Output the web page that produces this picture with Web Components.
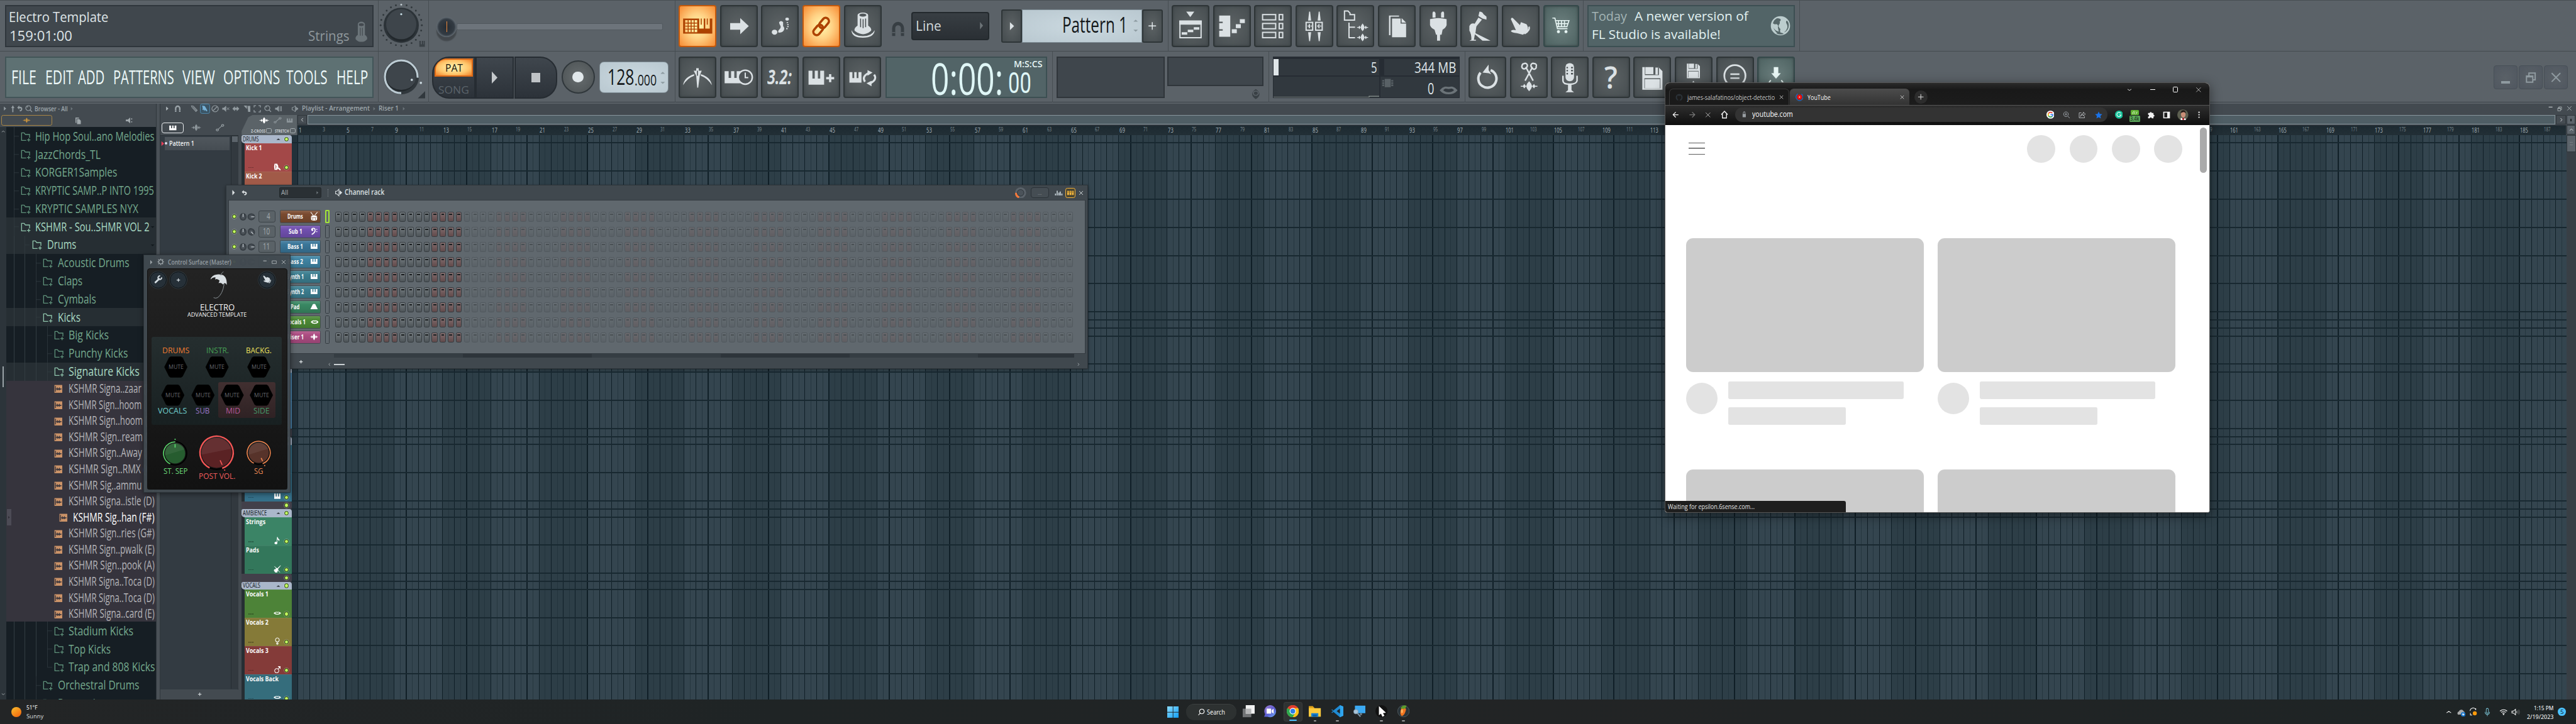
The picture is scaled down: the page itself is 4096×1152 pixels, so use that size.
<!DOCTYPE html>
<html lang="en"><head><meta charset="utf-8"><title>Desktop</title>
<style>html,body{margin:0;background:#1f2425;overflow:hidden;width:4096px;height:1152px}</style></head>
<body><desk-top></desk-top>
<script>
const BASE=`*{box-sizing:border-box}:host{display:block;font-family:"Open Sans","Noto Sans",sans-serif}
.row{display:flex;align-items:flex-start;flex:none}.b{flex:none;display:flex;align-items:center;justify-content:center}
svg{display:block;flex:none}.col{display:flex;flex-direction:column}`;
function def(name,css,render){customElements.define(name,class extends HTMLElement{
 connectedCallback(){if(this.shadowRoot)return;const r=this.attachShadow({mode:'open'});const t=document.createElement('template');
 t.innerHTML=`<style>${BASE}${css}</style>`+render(this);r.appendChild(t.content.cloneNode(true));}});}
/* flex row whose children are spaced by margins: [x,y,w,h,html,class,style] */
const B=(x0,y0,items,st='',cls='')=>{let p=x0;return `<div class="row ${cls}" style="${st}">`+items.map(([x,y,w,h,html='',c='',s=''])=>{
 const m=x-p;p=x+w;return `<div class="b ${c}" style="margin:${(y-y0).toFixed(1)}px 0 0 ${m.toFixed(1)}px;width:${w}px;height:${h}px;${s}">${html}</div>`}).join('')+'</div>'};
const T=(t,w,s,c,wt=400,f='Open Sans')=>`<t-x w="${w}" s="${s}" wt="${wt}" f="${f}" style="color:${c}">${t}</t-x>`;
const tx=(x,cy,w,s,t,c,wt,f)=>[x,cy-s*.7,w,s*1.4,T(t,w,s,c,wt,f)];
const I=(n,w,c='#dde3e6',h=w)=>`<ui-icon n="${n}" w="${w}" h="${h}" style="color:${c}"></ui-icon>`;
const ic=(cx,cy,w,n,c,h=w)=>[cx-w/2,cy-h/2,w,h,I(n,w,c,h)];

const mc=document.createElement('canvas').getContext('2d');
def('t-x',`:host{display:block;white-space:nowrap;flex:none}span{display:inline-block;transform-origin:0 50%}`,e=>{
 const w=+e.getAttribute('w'),s=+e.getAttribute('s'),wt=e.getAttribute('wt'),f=e.getAttribute('f');
 mc.font=`${wt} 100px "${f}"`;const n=mc.measureText(e.textContent).width*s/100;
 return `<style>:host{width:${w}px;height:${s*1.4}px;font:${wt} ${s}px/${s*1.4}px "${f}",sans-serif}span{transform:scaleX(${(w/n).toFixed(4)})}</style><span><slot></slot></span>`});

const P='<path d="M2 4h5v9h3V4h4v9h3V4h5v16H2z"/>';
const S=(d,w=2,x='')=>`<path d="${d}" fill="none" stroke="currentColor" stroke-width="${w}" ${x}/>`;
const ICON={
 tri:'<path d="M8 4l9 8-9 8z"/>',tup:'<path d="M3 19l9-14 9 14z"/>',tdn:'<path d="M3 5l9 14 9-14z"/>',tcap:'<path d="M2 18l10-11 10 11z"/>',
 chr:S('M8 3l8 9-8 9',3),chl:S('M16 3l-8 9 8 9',3),chu:S('M3 16l9-9 9 9',3),chd:S('M3 8l9 9 9-9',3),
 up:'<path d="M12 1l7 9h-4.500v13h-5V10H5z"/>',undo:'<path d="M9 1v5c9 0 13 3 12 9-.600 4-4 7-9 7l-2-4c4 0 6-1 6-4 0-2-2-3-7-3v5L1 9z"/>',
 mag:S('M16 16l6 6M10 2a8 8 0 1 0 .1 0M6 8a5 5 0 0 1 4-3',2.4),magnet:S('M5 22V11a7 7 0 0 1 14 0v11',5,'')+'<path d="M2.500 17h5M16.500 17h5" stroke="#5b6268" stroke-width="1.300"/>',
 piano:P,wave:'<path d="M1 11h3l1.500-4L8 12l1.500-6 2.500-5 2.500 5L16 12l2.500-5L20 11h3v2h-3l-1.500 4L16 12l-1.500 6-2.500 5-2.500-5L8 12l-2.500 5L4 13H1z"/>',
 auto:S('M7 17l10-10M4.500 16.500a3 3 0 1 0 .1 0M19.500 2a3 3 0 1 0 .1 0',2),
 docs:'<path d="M4 2h11v3H7v14H4z"/><path d="M9 7h7l5 5v11H9z"/>',spk:'<path d="M2 9h6l7-7v20l-7-7H2zM18 5h3v4h-3zM18 15h3v4h-3z"/>',
 folder:S('M21 14V6H11L8 2H2v18h11M19 15v8M15 19h8',2),pencil:S('M3 3l6 1 12 13-4 4L5 8zM8 7l10 11',2.200),brush:'<path d="M3 2l9 2 4 6 5 10-3 2-5-5-3 4-1-5-5 1 1-6z"/>',
 no:S('M12 2a10 10 0 1 0 .1 0M5 19L19 5',2.5),mute:'<path d="M1 9h5l7-7v20l-7-7H1z"/>'+S('M15 8l8 8M23 8l-8 8',2),lr:'<path d="M1 12l8-8v5h6V4l8 8-8 8v-5H9v5z"/>',
 slice:'<path d="M1 2h10v11zM13 3h9v19h-7z"/>',sel:S('M2 8V2h6M16 2h6v6M22 16v6h-6M8 22H2v-6',2.500),play:'<path d="M1 9h5l7-7v20l-7-7H1zM16 4h2v16h-2zM20 4h2v16h-2z"/>',
 spk2:S('M3 8h4l6-6v20l-6-6H3z',2)+'<path d="M15 5l8 7-8 7z"/>',plus:S('M12 3v18M3 12h18',4),plus2:S('M12 2v20M2 12h20',2.4),
 gear:S('M12 5a7 7 0 1 0 .1 0M12 1v4M12 19v4M1 12h4M19 12h4M4 4l3 3M17 17l3 3M20 4l-3 3M4 20l3-3',3),
 min:S('M2 8h20',4),max:S('M2 6h20v13H2z',2.5),x:S('M3 3l18 18M21 3L3 21',2.6),xs:S('M3 3l18 18M21 3L3 21',1.7),rest:S('M3 9h13v13H3zM8 8V3h13v14h-4',2.6)+'<path d="M3 8h13v4H3z"/>',
 drum:S('M2 1l8 9M22 1l-8 8',1.800)+'<path d="M3 13a9 3.500 0 0 1 18 0v7a9 3.500 0 0 1-18 0z"/><path d="M4.500 13.500a7.500 2 0 0 0 15 0M8 17v5M16 17v5" stroke="#6e4028" fill="none" stroke-width="1.300"/>',
 bass:S('M5 8a5 5 0 0 1 10-1c1 6-3 11-10 15',3)+'<circle cx="7" cy="8" r="3"/><circle cx="20" cy="6" r="1.700"/><circle cx="20" cy="13" r="1.700"/>',
 hill:'<path d="M1 20L8 5q4-4 8 0l7 15z"/>',lips:S('M2.500 12C6 5 9 6.500 12 7.500 15 6.500 18 5 21.500 12 17 20 7 20 2.500 12z',4),
 kick:'<path d="M3 3h9v18H3q-3-9 0-18z"/><path d="M7 6v12M7 12h4" stroke="#a34848" stroke-width="1.500"/><path d="M13 5q4 7 0 14h-2V5z"/><path d="M15 13l5 4 3 4-2 2-7-5z"/>',
 note:'<path d="M11 1h2q1 5 6 8l-2 5q0-4-5-6v11a4.500 3.500 0 1 1-2-3z"/>',violin:'<path d="M22 1l1 1-9 10 2 4-3 1-1 5-6 1-5-6 1-4 5-1 1-4 4 2z"/>'+S('M3 4l17 18',1.800),
 fem:S('M12 2a6 6 0 1 0 .1 0M12 14v9M8 19h8',2),male:S('M10 9a6.500 6.500 0 1 0 .1 0M14.500 10.500L21 3M14 3h7v7',2),
 wrench:S('M4 20l10-10',5,'stroke-linecap="round"')+S('M21 6a5 5 0 1 1-4-4',3.500),
 hand:'<path d="M1 3q0-2 2-2l7 6 1-2 7 2q4 4 2 9l-5 5-8-2q-5-1-5-3t5-1z"/>'+S('M22 13q0 5-5 9',2),
 eye:'<path d="M12 1q13 11 0 22-13-11 0-22z"/><circle cx="12" cy="10" r="4.500" fill="none" stroke="#5b6268" stroke-width="2"/>',
 chip:'<path d="M6 1h12v22H6zM1 4h4v4H1zM1 10h4v4H1zM1 16h4v4H1zM19 4h4v4h-4zM19 10h4v4h-4zM19 16h4v4h-4z"/>',
 globe:'<circle cx="12" cy="12" r="11.500"/><path d="M8 3q-4 2-5 6 2 2 4 1 3 1 2 4l1 5q-5-1-7-6 3 8 8 9 2 0 1-2-1-2 0-4-3-3-2-5 2-2 1-4 2-1 1-3-2-1-4-1z" fill="#566769"/><path d="M20 6q-2 0-1 3 2 3 1 6-1 3-4 5 6-2 6-9 0-3-2-5zM7 21q5-2 9 .500-4 2-9-.500z" fill="#566769"/>',
 cyl:'<path d="M7 4a5 3 0 0 1 10 0v12q4 2 3 5-3 3-8 3t-8-3q-1-3 3-5z"/><path d="M8.500 4.500a3.500 1.600 0 0 0 7 0 3.500 1.600 0 0 0-7 0z" fill="#43494f"/><path d="M10.500 8v9M13.500 8v9" stroke="#43494f" stroke-width="1"/>',
 graph:'<path d="M1 15h3v8H1zM6 4h3v19H6zM11 11h3v12h-3zM15 7h3v16h-3zM20 15h3v8h-3z" fill="#c6d2d8"/>',
 bars3:'<path d="M2 2h5.500v20H2zM9.500 2H15v20H9.500zM17 2h5.500v20H17z"/><path d="M3 8h3M10.500 8h3M18 8h3" stroke="#5a4210" stroke-width="2"/>',
 samp:'<path d="M1 1h22v22H1z"/><path d="M4 4v16M5 12h16M9 8v8M12 10v5M15 8v8M18 11v3" stroke="#33313a" stroke-width="2.200"/>',
 /* browser window */
 back:S('M21 12H4M12 3l-9 9 9 9',2.800),fwd:S('M3 12h17M12 3l9 9-9 9',2.800),home:S('M2 12L12 2l10 10M5.500 10v12h13V10',2.800),
 lock:'<path d="M5 10h14v12H5z"/>'+S('M8 11V6a4 4 0 0 1 8 0v5',2.400),
 goog:'<circle cx="12" cy="12" r="12" fill="#fff"/><g fill="none" stroke-width="3.300"><path d="M17.500 7.500A7 7 0 0 0 6 8.500" stroke="#ea4335"/><path d="M6 8.500a7 7 0 0 0 0 7" stroke="#fbbc05"/><path d="M6 15.500a7 7 0 0 0 11 1.500" stroke="#34a853"/><path d="M17 17a7 7 0 0 0 2-5h-7" stroke="#4285f4"/></g>',
 zin:S('M16 16l6 6M10 2a7.500 7.500 0 1 0 .1 0M10 6v7M6.500 9.500h7',2),share:S('M9 5H2v16h17v-5M15 3l7 6-7 6v-4q-7 0-9 6 1-9 9-10z',1.800),
 star:'<path d="M12 1l3.400 7.500 8 .9-6 5.500 1.700 8L12 18.800 4.900 22.900l1.700-8-6-5.500 8-.9z"/>',
 gram:'<circle cx="12" cy="12" r="12" fill="#15c39a"/><path d="M17 8a6.300 6.300 0 1 0 1 5h-5" fill="none" stroke="#fff" stroke-width="2"/>',
 puz:'<path d="M3 7h5a3 3 0 1 1 6 0h5v5a3 3 0 1 1 0 6v5h-5a3 3 0 0 0-6 0H3v-5a3 3 0 0 0 0-6z"/>',side:S('M3 3h18v18H3z',3.400)+'<path d="M14 3h8v18h-8z"/>',
 vdots:'<circle cx="12" cy="3.500" r="2.500"/><circle cx="12" cy="12" r="2.500"/><circle cx="12" cy="20.500" r="2.500"/>',
 git:'<circle cx="12" cy="12" r="11" fill="#2b3238"/><path d="M9 23v-4q-3 1-4-2M9 23v-5q-4-1-4-6 0-2 1-3 0-2 0-3 2 0 3 1h6q1-1 3-1v3q1 1 1 3 0 5-4 6v5" fill="#1b1b1b"/>',
 ytl:'<circle cx="12" cy="12" r="10.500" fill="none" stroke="#2563b8" stroke-width="2.600" stroke-dasharray="54 12" transform="rotate(-60 12 12)"/><circle cx="12" cy="12" r="7.500" fill="#f20d0d"/><circle cx="12" cy="12" r="1.800" fill="#fff"/>',
 ava:'<circle cx="12" cy="12" r="12" fill="#5c5f50"/><ellipse cx="13" cy="11" rx="5" ry="7" fill="#c98f78"/><path d="M7 9q1-8 7-7 5 1 4 7-2-4-5-3-4 0-6 3z" fill="#231a17"/><path d="M8 18l5 3 4-2 2 3q-6 4-12 0z" fill="#fff"/><path d="M11 19h4v4h-4z" fill="#b3202a"/>',
 /* taskbar */
 win:'<linearGradient id="a" x2="1" y2="1"><stop stop-color="#8adcff"/><stop offset="1" stop-color="#0f9cf5"/></linearGradient><path fill="url(#a)" d="M0 0h11.400v11.400H0zM12.600 0H24v11.400H12.600zM0 12.600h11.400V24H0zM12.600 12.600H24V24H12.600z"/>',
 find:S('M3 22l6-7M14 2.500a7.500 7.500 0 1 0 .1 0',2.200),
 tview:'<path d="M0 7h17v17H0z" fill="#707274"/><path d="M6 0h18v17H6z" fill="#f1f1f1"/><path d="M6 7h11v10H6z" fill="#b5b6b7"/>',
 chat:'<linearGradient id="b" x2="0.800" y2="1"><stop stop-color="#a37fd0"/><stop offset=".6" stop-color="#5a5bd0"/><stop offset="1" stop-color="#6aa0f0"/></linearGradient><path fill="url(#b)" d="M12 0a12 12 0 1 1-5 23H0l2-5A12 12 0 0 1 12 0z"/><path fill="#fff" d="M5 7h9v10H5zM15 10l4-3v10l-4-3z"/>',
 chrome:'<circle cx="12" cy="12" r="12" fill="#fbc116"/><path d="M12 12L1.600 6A12 12 0 0 1 22.400 6z" fill="#e33b2e"/><path d="M12 12L1.600 6A12 12 0 0 0 12 24l5-9z" fill="#2da94f"/><path d="M22.400 6H12v6l5 3-5 9A12 12 0 0 0 22.400 6z" fill="#fbc116"/><circle cx="12" cy="12" r="6.300" fill="#fff"/><circle cx="12" cy="12" r="4.900" fill="#2b7de9"/>',
 expl:'<path d="M0 2h8l3 3v5H0z" fill="#e0a21a"/><path d="M0 6h24v17H0z" fill="#fdca3d"/><path d="M5 16h14v7H5z" fill="#1a7fd0"/><path d="M8 19h8v4H8z" fill="#0b5fa8"/>',
 code:'<path d="M17 0l7 3v18l-7 3L4 13.500 1.500 15.500 0 14.500v-5l1.500-1L4 10.500z" fill="#1f8ad2"/><path d="M17 0l7 3v18l-7 3z" fill="#2fa5ee"/><path d="M17 7v10l-6.500-5z" fill="#202425"/><path d="M0 9.500l3.500 2.500L0 14.500z" fill="#202425"/>',
 rdp:'<path d="M3 1h21v15H3z" fill="#3ba9f2"/><path d="M13 16h4v4h-4z" fill="#6b7c88"/><circle cx="5" cy="13" r="4.500" fill="#a9c4d8" stroke="#7e96a8"/><path d="M8 16l6 7" stroke="#7e96a8" stroke-width="2.500"/>',
 cur:'<circle cx="12" cy="12" r="12" fill="#111"/><path d="M7 2v18l4-3 3 6 4-2-3-5 6-1z" fill="#fff"/>',
 fruit:'<circle cx="12" cy="12" r="11.500" fill="#2a3338" stroke="#56636a"/><path d="M8 6q9-2 9 3-2 10-8 13-6-4-1-16z" fill="#ef7420"/><path d="M6 6q4-7 12-5-1 8-9 6z" fill="#5b9c2c"/><ellipse cx="9" cy="12" rx="2" ry="4" fill="#ffb35c"/>',
 cloud:'<path d="M3 18a5 5 0 0 1 2-9 7 7 0 0 1 13-1q5 3 3 8z" fill="#a8aaab"/><circle cx="17" cy="17" r="6.500" fill="#1673c9"/><path d="M18 12l-5 6h4l-1 4 5-6h-4z" fill="#fff"/>',
 upd:S('M3 10a9 9 0 0 1 17-4M20 2v5M4 16v6h5',1.900)+'<circle cx="17" cy="17" r="6" fill="#ff9a0c"/>',
 mic:S('M12 2a3.500 3.500 0 0 1 3.500 3.500v7a3.500 3.500 0 0 1-7 0v-7A3.500 3.500 0 0 1 12 2zM5 12q0 7 7 7t7-7M12 19v5',1.800),
 wifi:S('M2 9q10-9 20 0M5.500 13q6.500-6 13 0M9 16.500q3-3 6 0',2.200)+'<circle cx="12" cy="19.500" r="2"/>',
 vol:S('M2 9h4l6-6v18l-6-6H2z',1.800)+S('M15 9q2 3 0 6',1.600)+S('M18 6q4 6 0 12M21 4q5 8 0 16',1.500,'opacity=".35"'),
 sun:'<linearGradient id="s" x2=".7" y2="1"><stop stop-color="#fbc02d"/><stop offset="1" stop-color="#f26a0f"/></linearGradient><circle cx="12" cy="12" r="12" fill="url(#s)"/>'};
def('ui-icon',':host{display:block;flex:none}',e=>`<svg width="${e.getAttribute('w')}" height="${e.getAttribute('h')}" viewBox="0 0 24 24" preserveAspectRatio="none" fill="currentColor">${ICON[e.getAttribute('n')]}</svg>`);

/* glyphs drawn in the 75x83 box of a toolbar key */
const pn=(x,y,w,h)=>`<path transform="translate(${x} ${y}) scale(${w/20} ${h/16}) translate(-2 -4)" d="M2 4h5v9h3V4h4v9h3V4h5v16H2z"/>`;
const wv=(x,y,w,h)=>`<g transform="translate(${x} ${y}) scale(${w/24} ${h/24})">${ICON.wave}</g>`;
const sq=(x,y,w,h=w)=>`<path d="M${x} ${y}h${w}v${h}h-${w}z"/>`;
const bx=(x,y,w,h,s=2.500)=>`<rect x="${x}" y="${y}" width="${w}" height="${h}" fill="none" stroke="currentColor" stroke-width="${s}"/>`;
const save=(x,y,k)=>`<path transform="translate(${x} ${y}) scale(${k})" fill-rule="evenodd" d="M0 0h32l8 8v37H0zM5 0v16h28V0zM4 22v20h32V22z"/><path transform="translate(${x} ${y}) scale(${k})" d="M6 0h16v14H6zM26 1h5v14h-5zM5 24h30v18H5z"/>`;
const KEY={
 roll:'<path fill-rule="evenodd" d="M9 27h58v30H9zM13 30v24h24V30zM41 27v20h9V27zM53 27v20h9V27z"/>'+S('M13 36h24M13 42h24M13 48h24M19 30v24M25 30v24M31 30v24',1.800)+S('M45 27v12M57 27v12',2),
 arrow:sq(20,36,21,13)+'<path d="M40 26l17 16-17 16z"/>',
 steps:'<ellipse cx="27" cy="54" rx="5.500" ry="5"/><ellipse cx="52" cy="28" rx="3.500" ry="3"/><path d="M36 34q4-4 8 0 0 4 0 8 4 4 1 9-3 4-10 4-2-3 1-6 4-3 3-7-3-4-3-8z"/><path d="M51 34h3v2h-3zM52 38h3v2h-3zM52 42h3v2h-3zM50 46h3v2h-3z"/>',
 link:'<g transform="rotate(40 37 42)" fill="none" stroke="currentColor" stroke-width="4.500"><rect x="31" y="22" width="13" height="23" rx="6.500"/><rect x="31" y="40" width="13" height="23" rx="6.500"/></g>',
 knob:'<path d="M27 20a10.500 5 0 0 1 21 0v21q9 6 5 11-7 6-15 6t-16-6q-4-5 5-11z"/><path d="M15 50q0 15 22.500 15T61 50q-6 12-23.500 12T15 50z"/><ellipse cx="37.500" cy="20" rx="7" ry="3" fill="#51575a"/><path d="M33 27v17M38 28v18M43 27v17" stroke="#4b5154" stroke-width="2"/>',
 metro:'<path d="M9 57q2-16 22-22v3Q17 43 9 57zM66 57q-2-16-22-22v3q14 5 22 19zM30 28h5v-5h5v5h6l-4 10-3 24h-2l-2-24z"/><path d="M37.500 28v10" stroke="#4b5154" stroke-width="2"/>',
 pclock:pn(9,29,32,24)+'<circle cx="50" cy="41" r="14" fill="#4f5558" stroke="currentColor" stroke-width="3"/>'+S('M50 32v10h6',2.500),
 pplus:pn(12,28,31,28)+S('M55 35v16M47 43h16',4.500),ploop:pn(12,31,24,21)+S('M43 50q-7-10 7-17M61 36q7 9-7 17',4)+'<path d="M48 27l10 5-10 6zM56 48l-10 5 10 6z"/>',
 plist:'<path d="M29 13h16l-8 11z"/>'+bx(16.500,32,42,33)+sq(15,31,45,8)+sq(20,54,11,5)+sq(32,49,11,5)+sq(44,44,11,5),
 proll:'<path d="M12 21h22v42H12v-12h7v-3h-7V36h7v-3h-7z"/>'+sq(37,48,10,8)+sq(45,38,10,8)+sq(53,28,10,8),
 rack:[0,17.700,35.400].map(y=>bx(17,19+y,26,10.500)+bx(50,19+y,7,10.500)).join(''),
 mixer:'<path d="M27 13h2l2 18h-6zM46 13h2l2 18h-6zM25 54h6l-2 18h-2zM44 54h6l-2 18h-2z"/>'+bx(21,34.500,13,15.500)+bx(40,34.500,13,15.500)+S('M27.500 38v8M46.500 38v8M24 42h2M30 42h2M43 42h2M49 42h2',2.500),
 brow:S('M16 30V12h7l4 4v3h9v11z',2.500)+S('M25 35v31M25 44h12M25 65h12',2.500)+wv(40,36,24,17)+wv(40,56,24,17),
 docs:'<path d="M22 21h20v2H25v37h-3z"/><path d="M28 27h17v10h11v27H28zM47 26l9 9h-9z"/>',
 plug:'<path d="M27 13h3l2 3v9h-6V16zM45 13h3l1 3v9h-6V16zM21 28q16-4 33 0v12q-2 6-8 9l-2 10h-3v12h-6V59h-2l-3-10q-7-3-9-9z"/>',
 person:'<path d="M38 13q6 0 8 5l6 5 0 6-8-2-8-5zM36 25l7 4-14 17-4-3z"/><path d="M18 42q3-7 10-5l4 5-2 14 30 15H44L29 58l-2 11h4v2H18l4-2q0-12-4-18z"/>',
 point:'<path d="M18 28q1-4 4-2l14 14 2-6 11 4q5 7 2 14l-9 7-12-3q-11-1-12-4 2-4 10-2z"/>'+S('M54 43q3 7-9 14',3),
 cart:S('M18 26h5l5 21h20M23 31h28l-4 12H27M30 31v12M36 31v12M42 31v12M25 37h24',2)+'<circle cx="30" cy="53" r="3"/><circle cx="45" cy="53" r="3"/>',
 redo:S('M24 32a18 18 0 1 0 20-5',5)+'<path d="M28 32l12-16v11l5 8-5-2z"/>',
 cut:S('M28 14a4 4 0 0 1 4 8 4 4 0 0 1-8-4 4 4 0 0 1 4-4zM48 14a4 4 0 0 1 4 6 4 4 0 0 1-8 2 4 4 0 0 1 4-8zM32 22l14 26M44 22L30 48',3)+wv(20,48,36,22),
 micr:'<rect x="29" y="13" width="17" height="36" rx="8"/><path d="M31 22h3M40 22h4M31 28h3M40 28h4M31 34h3M40 34h4" stroke="#4b5154" stroke-width="3"/>'+S('M24 38v10q0 7 13.500 7T52 48V38',3)+'<path d="M34 55h7v12l5 4H29l5-4z"/>',
 save:save(18,21,1),saveup:save(24,14,.65)+'<path d="M37 48l8 12H29zM34 60h6v8h-6z"/>',
 info:'<circle cx="37" cy="38" r="21" fill="none" stroke="currentColor" stroke-width="3.500"/>'+S('M28 35h18M28 43h18',3),
 down:'<path d="M33 21h9v12h5L37.500 44 28 33h5z"/>'+S('M27 47L19 58h37L48 47',2.500)};
def('tool-key',`:host{width:75px;height:83px;border:2.500px solid #2e3537;border-radius:5px;background:radial-gradient(#5c6264,#464d50);color:#dbe1e4;box-shadow:inset 0 0 4px #353c3f;overflow:hidden}
:host([on]){border-color:#c4590c;background:radial-gradient(ellipse,#fff2a8 10%,#ffd184 45%,#f88c34);color:#ad4200;box-shadow:none}
:host([teal]){border-color:#34494a;background:radial-gradient(#6d807f,#4c6160);color:#e8f6f4}svg{margin:-2.500px}.t{display:flex;align-items:center;justify-content:center;height:76px}`,e=>{
 const k=e.getAttribute('k');return k=='q'?`<div class="t">${T('?',26,60,'#dbe1e4',600)}</div>`:k=='321'?`<div class="t">${T('<i>3.2:</i>',50,40,'#dbe1e4',700)}</div>`:`<svg width="75" height="83" viewBox="0 0 75 83" fill="currentColor">${KEY[k]}</svg>`});
const key=(x,y,k,a='',w=75)=>[x,y,w,83,`<tool-key k="${k}" ${a} style="width:${w}px"></tool-key>`];

const dots=[...Array(24)].map((_,i)=>{const a=i*Math.PI/12;return `<circle cx="${50+41*Math.sin(a)}" cy="${50-41*Math.cos(a)}" r="1.800" fill="${i?'#30373b':'#c6d0d5'}"/>`}).join('');
const spin='<div class="spin">'+I('tup',12,'#8d9ba1',7)+I('tdn',12,'#8d9ba1',7)+'</div>';
def('main-toolbar',`:host{height:206px;background:#5b6268;border-top:1px solid #474e53}
.r1{height:101px;border-bottom:2px solid #444b50}.r2{height:102px;border-bottom:2px solid #3b4247}
.v{background:#474e53}.hint{background:#40474d;border:3px solid #2f363c}.menu{background:#5e7173;border:3px solid #425558}
.track{background:#6d747b;border:1.500px solid #51585e;border-radius:3px}.thumb{border-radius:50%;background:radial-gradient(#252c33,#333b43 55%,#6f7880 75%,#20262b);box-shadow:0 8px 2px #0004}.thumb i{width:1.500px;height:22px;background:#f08a3c}
.dd{background:linear-gradient(#383e43,#2a2f34);border:3px solid #23292d;border-radius:5px}.sm{background:radial-gradient(#5c6264,#444b4e);border:2.500px solid #2e3537;border-radius:4px}
.lcd{background:radial-gradient(#cbd9e0,#b9c8d0);border:2px solid #7e8c94}.spin{display:flex;flex-direction:column;gap:13px}
.rec{border-radius:50%;background:radial-gradient(#676d6f,#4b5153);border:3px solid #30373b}.rec i{width:22px;height:22px;border-radius:50%;background:#e1e8eb}
.tr{background:linear-gradient(#3f464d,#2c3239);border:3px solid #262c32}.pat{background:radial-gradient(#ffe9a0 20%,#ffc56a 60%,#f07f28);border:3px solid #dd6a16;border-radius:22px 0 0 0}
.time{background:#526467;border:2.500px solid #3c4f52}.dk{background:#3f464c;border:2.500px solid #2f353a}.cpu{background:#262c33;flex-direction:column;align-items:flex-start;justify-content:flex-start}.cell{background:#31383e}
.wc{background:radial-gradient(#5a6167,#505760);border:2px solid #485057;border-radius:5px}`,()=>{
 const r1=[[10,10,732,83,`<div class="col" style="width:100%;height:100%">${B(13,13,[tx(18,34,198,27,'Electro Template','#dfe5e8')],'height:39px')}${B(13,52,[tx(19.500,72,125,27,'159:01:00','#dfe5e8'),tx(613,72,82,27,'Strings','#8f979c'),[700,43,37,40,I('cyl',34,'#6b7479',42)]],'height:38px;margin-top:0')}</div>`,'hint'],
 [751,1,1,100,'','v'],[752,1,93,99,`<svg width="93" height="99" viewBox="5 1 93 99">${dots}<circle cx="50" cy="50" r="35" fill="#2c3338"/><circle cx="50" cy="48" r="30" fill="#3e454b"/><path d="M21 60a30 30 0 0 0 58 0q-10 18-29 18T21 60z" fill="#22282c"/><circle cx="50" cy="28" r="2" fill="#c5dbe4"/><path d="M86 81h3v7h2v-7h3v7h1v-7h2v12H86z" fill="#3a4146"/></svg>`],
 [851,1,1,100,'','v'],[868,33,40,40,'<i></i>','thumb'],[908,46,409,14,'','track'],[1341,1,1,100,'','v'],
 key(1349,10,'roll','on'),key(1431,10,'arrow'),key(1513,10,'steps'),key(1595,10,'link','on'),key(1677,10,'knob'),
 [1770,41,30,33,I('magnet',30,'#373e43',33)],[1811,23,155,57,B(1814,26,[tx(1820,51,51,27,'Line','#d3dadd'),[1943,40,16,22,I('tri',16,'#6d7478',22)]],'width:149px;height:51px'),'dd'],
 [1990,18,42,67,I('tri',22,'#dde3e6',24),'sm'],[2032,18,238,67,B(2034,20,[tx(2112,48,130,43,'Pattern 1','#14181a'),[2250,34,14,34,spin]],'width:234px;height:63px'),'lcd'],[2270,18,42,67,I('plus2',18,'#e5ebee'),'sm'],
 [2321,1,1,100,'','v'],...['plist','proll','rack','mixer','brow','docs','plug','person','point'].map((k,i)=>key(2329+82*i,10,k)),key(3068,10,'cart','teal',71),[3146,1,1,100,'','v'],
 [3155,10,413,83,`<div class="col" style="width:352px;height:77px">${B(3158,13,[tx(3164,32,70,26,'Today','#a3b4b5'),tx(3249,32,226,26,'A newer version of','#e2f2f2')],'height:37px')}${B(3158,50,[tx(3164,68,256,26,'FL Studio is available!','#e2f2f2')],'height:36px')}</div>`+I('globe',40,'#bccdce'),'time','justify-content:flex-start;gap:10px'],[3576,1,1,100,'','v']];
 const mi=[['FILE',22,50],['EDIT',89.500,56],['ADD',155.500,53],['PATTERNS',225.600,121],['VIEW',363,65],['OPTIONS',444,113],['TOOLS',569,82],['HELP',669,63]];
 const r2=[[10,112,732,83,B(13,115,mi.map(([t,x,w])=>tx(x,153,w,39,t,'#eefafa')),'width:726px;height:77px'),'menu'],
 [751,102,1,101,'','v'],[752,103,93,98,`<svg width="93" height="98" viewBox="5 1 93 98"><circle cx="50" cy="50" r="35" fill="#30373c"/><circle cx="50" cy="50" r="32.500" fill="none" stroke="#bccbd3" stroke-width="4" stroke-dasharray="154 204" transform="rotate(90 50 50)"/><circle cx="50" cy="50" r="29" fill="#3e454b"/><path d="M23 62a30 30 0 0 0 54 0q-10 14-27 14T23 62z" fill="#22282c"/><circle cx="71" cy="56" r="2.300" fill="#cddbe2"/><circle cx="89" cy="62" r="2.300" fill="#cddbe2"/><path d="M98 78v15H83z" fill="#31383d"/></svg>`],
 [851,102,1,101,'','v'],[859,112,86,84,`<div class="col" style="gap:12px;align-items:center;width:80px;height:78px"><div class="b pat" style="width:77px;height:36px;margin-top:1px">${T('PAT',35,21,'#15110a')}</div>${T('SONG',61,21,'#5b636a')}</div>`,'tr','border-radius:34px 0 0 34px;overflow:hidden'],
 [945,112,76,84,I('tri',30,'#c5c9cc',36),'tr'],[1022,112,86,84,'<div style="width:18px;height:18px;background:#bfc3c6"></div>','tr','border-radius:0 34px 34px 0'],
 [1116,120,66,66,'<i></i>','rec'],[1191,122,138,63,B(1193,124,[tx(1207,152,53,43,'128','#14181a'),tx(1262,158.500,44,30,'.000','#14181a'),[1310,140,14,28,spin]],'width:134px;height:59px'),'lcd','border-radius:9px'],[1341,102,1,101,'','v'],
 ...['metro','pclock','321','pplus','ploop'].map((k,i)=>key(1349+82*i,112,k)),
 [1760,112,321,83,B(1762,114,[tx(1850,154,144,86,'0:00:','#dff6f6'),tx(2003,164.500,46,58,'00','#dff6f6',400,'Roboto'),tx(2015,126,57,17,'M:S:CS','#e6f5f5',600)],'width:316px;height:78px'),'time'],
 [2092,102,1,101,'','v'],[2100,112,215,83,'','dk'],[2320,112,160,59,'','dk','border-right:0'],[2480,112,32,86,`<div class="dk" style="width:32px;height:59px;border-left:0"></div>${I('eye',27,'#394045',22)}`,'','flex-direction:column;justify-content:space-between'],[2521,102,1,101,'','v'],
 [2530,112,372,83,B(2530,112,[[2532,117,210,33,B(2532,117,[[2532,117,10,33,'','','background:#dfe5e8'],tx(2725,134,12,29,'5','#dfe5e8')],'width:210px;height:33px'),'cell'],[2752,117,148,33,B(2752,117,[tx(2812,134,83,29,'344 MB','#dfe5e8')],'width:148px;height:33px'),'cell']],'height:40px;width:372px')+B(2530,152,[[2532,152,210,42,'<svg width="210" height="42"><path d="M0 41h190v-2h20" stroke="#8b9490" fill="none" stroke-width="1.500"/></svg>','cell'],[2744,152,156,42,B(2744,152,[ic(2758,165,24,'chip','#596166',18),tx(2838,176,13,32,'0','#dfe5e8'),ic(2880,179,36,'lips','#6b7378',24)],'width:156px;height:42px'),'cell']],'height:43px;width:372px'),'cpu'],
 [2911,102,1,101,'','v'],...['redo','cut','micr','q','save','saveup','info','down'].map((k,i)=>key(2919+82*i,112,k,i==7?'teal':'')),
 ...[['min',4957],['rest',5007],['x',5057]].map(([n,x])=>[x,130,47,47,n=='min'?'<div style="width:18px;height:5px;background:#8f9aa0;margin-top:19px"></div>':I(n,23,'#8f9aa0'),'wc'])];
 return B(0,1,r1,'','r1')+B(0,102,r2,'','r2')});

/* browser tree */
const TREE=[[0,'Hip Hop Soul..ano Melodies',237],[0,'JazzChords_TL',130],[0,'KORGER1Samples',163],[0,'KRYPTIC SAMP..P INTO 1995',236],[0,'KRYPTIC SAMPLES NYX',205],[0,'KSHMR - Sou..SHMR VOL 2',227,1],[1,'Drums',58,1],[2,'Acoustic Drums',142],[2,'Claps',49],[2,'Cymbals',76],[2,'Kicks',45,1],[3,'Big Kicks',80],[3,'Punchy Kicks',118],[3,'Signature Kicks',141,1],
...['Signa..zaar (D)','Sign..hoom (D)','Sign..hoom (E)','Sign..ream (F)','Sign..Away (A)','Sign..RMX (G)','Sig..ammu (C)','Signa..istle (D)','Sig..han (F#)','Sign..ries (G#)','Sign..pwalk (E)','Sign..pook (A)','Signa..Toca (D)','Signa..Toca (D)','Signa..card (E)'].map(t=>[9,'KSHMR '+t,171]),
[3,'Stadium Kicks',129],[3,'Top Kicks',84],[3,'Trap and 808 Kicks',172],[2,'Orchestral Drums',162],[2,'Percussion',98]];
def('tree-item',`:host{height:36px;flex:none;background:#161e24;color:#6fa488}:host([open]){background:#262e33}:host([sample]){height:32px;background:#36343d}.row{height:100%}.g{border-left:1px solid #333d42;height:100%}.mk{background:#4c4b55}`,e=>{
 const l=+e.getAttribute('l'),t=e.getAttribute('t'),w=+e.getAttribute('w'),open=e.hasAttribute('open');
 if(l==9){const f=t.includes('F#');return B(13,0,[[14,0,8,32,f?I('tri',8,'#2c2b33'):'',f?'mk':''],[f?118:108,8.500,17,17,I('samp',17,'#cb9368')],tx(f?145:136,15.500,f?162:171,25,t,f?'#fff':'#b5b5b9')],'height:32px')}
 const ix=[41,63,85,107][l],xs=[27,49,71,93],it=[];
 for(let i=0;i<l;i++)it.push([xs[i],0,1,36,'','g']);
 it.push([xs[l],0,10,36,`<svg width="10" height="36"><path d="M.5 0V${e.hasAttribute('last')?18:36}M0 18.500h10" stroke="#333d42" fill="none"/></svg>`],[ix,9,20,20,I('folder',20,open?'#8fc4ab':'#5e9079')],tx([70,93,114,136][l],17.500,w,24.500,t,open?'#a9dcc4':'#74a98d'));
 if(open&&l<2)it.push([299,14,9,9,I('tdn',9,'#11181c',6)]);
 return B(13,0,it)});
const G='#939ca1';
def('browser-panel',`:host{width:310px;height:1185px;background:#434a50;flex:none;overflow:hidden}.tab{border:2px solid #a98646;border-radius:4px}.m{display:flex;height:1138px}.sb{width:13px;flex:none;background:#2c343a;display:flex;flex-direction:column;align-items:center;padding-top:6px}.sb i{width:3px;height:41px;background:#9aa3a7;margin:464px 0 608px}.t{flex:1;overflow:hidden;display:flex;flex-direction:column}`,()=>
 B(0,206,[ic(10,216,12,'tri',G),ic(25,216,11,'up',G,15),ic(40,216,12,'undo',G,14),ic(57,216,15,'mag',G),tx(69,216,66,13.500,'Browser - All','#9fa8ad',600),ic(143,216,10,'tri','#6d767b')],'height:22px')+
 B(0,228,[[3,228.500,101,22,I('wave',16,'#c08f3f',11),'tab'],ic(155,239.500,15,'docs','#a0a8ac'),ic(257,239.500,16,'spk','#a0a8ac',14)],'height:25px')+
 `<div class="m"><div class="sb">${I('chu',8,'#c2c8cb',6)}<i></i>${I('chd',8,'#c2c8cb',6)}</div><div class="t">${TREE.map(([l,t,w,o])=>`<tree-item l="${l}" t="${t}" w="${w}" ${o?'open':''} ${l==9?'sample':''} ${t.startsWith('Trap')?'last':''}></tree-item>`).join('')}</div></div>`);

/* playlist */
const LED=(s=9)=>`<i style="display:block;width:${s}px;height:${s}px;border-radius:50%;background:radial-gradient(#d8ff7a,#8fd92c);border:1px solid #2f4418;box-shadow:0 0 0 1px #fff5"></i>`;
def('track-head',`:host{flex:none;overflow:hidden}.h{background:#aab7ca;border-radius:3px 5px 0 6px;height:16px}.s{background:#42404a;border-radius:0 4px 4px 0;height:16px}.t{height:56px;margin-left:6px;border-top:1px solid #fff1}`,e=>{
 const k=e.getAttribute('k'),t=e.getAttribute('t'),w=+e.getAttribute('w'),i=e.getAttribute('i');
 if(k=='h')return `<div class="h">${B(480,0,[...(t?[tx(482,7,w,12.500,t,'#15191d')]:[]),ic(553,8,9,'tcap','#15191d',6),[564,3,10,10,LED()]])}</div>`;
 if(k=='s')return `<div class="s">${B(480,0,[[564,3,10,10,LED()]])}</div>`;
 return `<div class="t" style="background:${k}">${t?B(486,0,[tx(488,8,w,13,t,'#fafafa',700)],'height:36px'):'<div style="height:36px"></div>'}${B(486,36,[[494,46,10,2,'','','background:repeating-linear-gradient(90deg,#0005 0 2px,transparent 2px 4px)'],[543,36,17,18,I(i,15,'#fff',i=='lips'?9:16)],[564,42,10,10,LED()]],'height:19px')}</div>`});
const blank=(c,n)=>Array(n).fill([c,'',0,'piano']);
const TR=[['h','DRUMS',32],['#a34848','Kick 1',32,'kick'],['#a15a48','Kick 2',32,'kick'],...blank('#a15a48',4),['s'],['s'],['h'],['#4a83ad','',0,'piano'],['h'],...blank('#4a83ad',2),['s'],['h'],...blank('#35708a',2),['s'],['h','AMBIENCE',48],['#3b8466','Strings',39,'note'],['#33775b','Pads',26,'violin'],['s'],['h','VOCALS',35],['#4d8338','Vocals 1',45,'lips'],['#857a38','Vocals 2',45,'fem'],['#843b39','Vocals 3',45,'male'],['#356d7c','Vocals Back',65,'lips']];
def('playlist-grid',`:host{width:4521px;height:1123px;background:#2d3e47}`,()=>{
 let s='<svg width="4521" height="1123" shape-rendering="crispEdges"><path fill="#22313a" d="M0 0h11v1123H0z"/>',wk='',st='',hz='',y=0;
 for(let g=0;g<24;g++)s+=`<path fill="#34454f" d="M${11+g*192} 0h96v1123h-96z"/>`;
 for(let i=0;i<=187;i++){st+=`M${11+24*i+.5} 0v1123`;wk+=`M${23+24*i+.5} 0v1123`}
 for(const t of TR){y+=/^[hs]$/.test(t[0])?16:56;hz+=`M0 ${y-.5}h4521`}
 return s+`<path d="${wk}" stroke="#22323b"/><path d="${st}" stroke="#101f27" stroke-width="1.300"/><path d="${hz}" stroke="#182830" stroke-width="2.500"/></svg>`});
def('playlist-panel',`:host{width:4810px;height:1185px;background:#434a50;flex:none;overflow:hidden;border-left:1px solid #30373c}
.on{border:1.500px solid #4f86a8;border-radius:4px;background:#3b5566}.w{border:2px solid #e8ecee;border-radius:5px}.main{display:flex}
.pick{width:155px;height:1102px;background:#333b42;border-top:2px solid #2a3137;border-right:1px solid #23292e}.pt{background:linear-gradient(#50575d,#454c52);height:26px}
.sc{background:#32393f;border-left:1px solid #262d32;height:100%}.st{background:#5c646b;border:1px solid #30373c}
.tabs{width:110px;height:40px;background:#5b6368;clip-path:polygon(20% 0,100% 0,100% 100%,0 100%,0 80%,12% 12%);flex:none}.sq{border:1px solid #aab2b6;border-radius:3px}.bar{background:#4f5e65;border:2px solid #87959c}.bt{background:#454c52;border:1px solid #30373c}
.rul{background:linear-gradient(#1d2a31,#222f36);height:20px;display:flex;padding-left:2px;overflow:hidden;width:4510px;border-top:1px solid #2b333a}.rul div{width:48px;flex:none}.heads{width:100px;flex:none;background:#262e33;overflow:hidden}.vs{width:19px;background:#383f45;flex:none;display:flex;flex-direction:column;height:1141px}`,()=>{
 const top=B(319,206,[ic(332,216,12,'tri','#b0b8bc'),ic(353,216,14,'magnet','#9aa3a8',15),ic(386,216,15,'pencil',G),[397,206,20,20,I('brush',14,'#76b2d8'),'on'],...[[427,'no'],[448,'mute'],[469,'lr'],[491,'slice'],[511,'sel'],[532,'mag'],[553,'play'],[586,'spk2']].map(([x,n])=>ic(x,216,15,n,G)),tx(600,215,135,13.500,'Playlist - Arrangement','#9fa8ad',600),ic(744,216,10,'tri','#6d767b'),tx(753,215,40,13.500,'Riser 1','#9fa8ad',600),ic(803,216,10,'tri','#6d767b'),ic(5069,214,9,'min','#c0c6c9'),ic(5088,216,10,'rest','#a9b1b5'),ic(5107,216,11,'x','#a9b1b5')],'height:22px');
 const left=`<div style="width:155px;flex:none">${B(319,228,[[321,244,44,21,I('piano',17,'#fff',14),'w'],ic(390,254,20,'wave','#8b9499',15),ic(437,254,17,'auto','#9fa8ac',15)],'height:41px')}<div class="pick row">${B(319,271,[[319,279,8,14,I('tri',14,'#e8405a')],[327,273,129,26,B(327,273,[[327,283,5,5,'','','background:#dde;border-radius:50%'],tx(336,286,50,13,'Pattern 1','#f1f3f4',600)],'width:129px;height:26px'),'pt'],[459,271,14,1100,'<div class="st" style="width:14px;height:14px;margin-bottom:auto"></div>','sc']],'height:1100px')}</div><div class="b" style="height:20px">${I('plus',9,'#c5cbce')}</div></div>`;
 let rul='';for(let n=1;n<=187;n+=2)rul+=`<div>${n%4==1?T(n,String(n).length*5+1,13,'#a9b5bc'):T(n,String(n).length*4+1,11,'#7f8c93')}</div>`;
 const head=B(480,228,[[480,228,110,41,`<div class="col tabs">${B(480,228,[ic(524.500,239,20,'wave','#fff',14),ic(552,239,16,'auto','#939ca1',13),ic(576,239,14,'piano','#8b9499',12)],'height:23px')}${B(480,251,[tx(499,259,29,9,'Z-CROSS','#c9cfd2',700),[529,254,11,11,'','sq'],tx(546,259,28,9,'STRETCH','#c9cfd2',700),[576,254,11,11,'','sq']])}</div>`],
 [591,229,4528,40,`<div class="col" style="width:4528px;height:40px">${B(591,229,[[591,229,19,19,I('chl',9,'#dfe4e6'),'bt'],[611,229,4468,19,'','bar'],[5080,229,20,19,I('chr',9,'#dfe4e6'),'bt'],[5101,229,18,19,'<i style="width:3px;height:5px;background:#1b2024"></i>','st']],'height:20px')}${B(591,249,[[591,249,4509,20,`<div class="rul">${rul}</div>`],[5101,249,18,19,I('chu',9,'#dfe4e6'),'st']])}</div>`]],'height:41px');
 return top+`<div class="main">${left}<div class="col" style="margin-left:6px">${head}<div class="main" style="height:1123px"><div class="heads">${TR.map(([k,t='',w=0,i=''])=>`<track-head k="${k}" t="${t}" w="${w}" i="${i}"></track-head>`).join('')}</div><playlist-grid></playlist-grid><div class="vs"><div class="st b" style="height:33px"><i style="width:7px;height:6px;border:solid #757d83;border-width:1.500px 0"></i></div></div></div></div></div>`});

/* channel rack */
const CH=[['4','Drums',31,'#7a4a2f','drum'],['10','Sub 1',27,'#7150b0','bass'],['11','Bass 1',31,'#3a7699','piano'],['12','Bass 2',31,'#3f84a3','piano'],['13','Synth 1',34,'#3c7e90','piano'],['14','Synth 2',34,'#3c7e90','piano'],['15','Pad',18,'#398863','hill'],['16','Vocals 1',40,'#4c8a36','lips'],['17','Riser 1',34,'#ad4d83','wave']];
def('channel-strip',`:host{height:30px;flex:none}.kn{border-radius:50%;background:radial-gradient(#5d646b,#2e353b 75%)}.kn i{width:2px;height:6px;background:#dbe2e6;margin-top:-6px}.n{background:#5a6267;border:1.500px solid #3c4348;border-radius:4px}.nm{border:1.500px solid #444c52;border-radius:3px;background-image:linear-gradient(#fff2,#0000 30%,#0002)}.se{border:2px solid #353c42;border-radius:2px}.se.on{border:2.500px solid #a2e53a}
.st{display:flex;gap:4px}.st i{width:12px;height:20px;border-radius:3px;border:1px solid #343a3e;border-bottom-width:2px;background:linear-gradient(#747b7f,#4d5458);flex:none;display:flex;justify-content:center}.st i::before{content:"";width:6px;height:2px;background:#1a1e20;margin-top:3px}.st i.r{background:linear-gradient(#816c6d,#614a4b)}.st i.d{opacity:.32}`,e=>{
 const [n,t,w,c,i]=CH[+e.getAttribute('i')];let s='';for(let k=0;k<92;k++)s+=`<i class="${k%8>3?'r':''} ${k>15?'d':''}"></i>`;
 return B(455.500,416.500,[[461,426,10,10,LED(9)],[476,424,14,15,'<i></i>','kn'],[493,424,14,15,'<i></i>','kn','transform:rotate('+(n=='10'?140:90)+'deg)'],[514,419,33,24,B(514,419,[tx(537-n.length*7,430,n.length*7,17,n,'#a5adb0')],'width:33px;height:24px'),'n'],[556,418,82,26,B(556,418,[tx(587-w/2,430,w,13,t,'#fafafa',700),ic(625,430,16,i,'#fff',i=='drum'?18:i=='lips'?11:15)],'width:82px;height:26px'),'nm','background-color:'+c],[647,418,8,26,'','se '+(n=='4'?'on':'')],[665.500,421,1468,20,`<div class="st">${s}</div>`]])});
def('channel-rack',`:host{width:1714px;height:366px;background:#40484e;border:1px solid #2d3439;box-shadow:0 2px 6px #0006}.dd{background:#2a3034;border:2px solid #22282b;border-radius:3px}.bd{height:307px;background:#60686e;border:1.500px solid #343b41;margin:0 4px 0 4px;padding-top:18px;overflow:hidden}.seg{background:#353d43}.seg.d{background:#2d343a}.y{border:2px solid #f2b13a;border-radius:4px;background:#4b4632}`,()=>
 B(450,369,[ic(464,383,13,'tri','#dde2e4',16),ic(486,383,12,'undo','#dde2e4'),[555,372,83,22,B(555,372,[tx(559,382,14,13.500,'All','#aab1b5'),ic(631,383,9,'tri','#70787d')],'width:83px;height:22px'),'dd'],[651,376,2,15,'','','border-left:2px dotted #798186'],ic(673,383,16,'spk2','#d8dee1'),tx(685,382,79,14.500,'Channel rack','#dde2e4',600),
 [2018,372,22,22,'<svg width="22" height="22"><circle cx="11" cy="11" r="9" fill="none" stroke="#5b636a" stroke-width="4"/><path d="M2 11a9 9 0 0 0 6 9" fill="none" stroke="#f5793a" stroke-width="4"/><circle cx="11" cy="11" r="6.500" fill="#4b535a" stroke="#2b3237"/></svg>'],[2049,372,36,22,T('...',8,12,'#8a9398'),'','border:1.500px solid #2b3237;border-radius:5px;background:#454d53'],ic(2104,383,16,'graph',G,12),[2117,373,20,20,I('bars3',15,'#f6b93f',10),'y'],ic(2149,383,10,'x','#d8dee1')],'height:28px')+
 `<div class="bd">${CH.map((_,i)=>`<channel-strip i="${i}"></channel-strip>`).join('')}</div>`+
 B(450,704,[[592,713,12,12,I('plus',9,'#dfe4e6')],[650,719,10,10,I('chl',7,'#c2c8cb')],[663,704,257,22,'<i style="width:22px;height:3px;background:#c9cfd2"></i>','','align-items:flex-end;justify-content:flex-start;background:linear-gradient(#353d43 7px,transparent 7px)'],...[920,1176,1432,1688].map((x,i)=>[x,704,256,7,'',i%2?'seg':'seg d']),[1944,704,191,7,'','seg d'],[2139,719,9,10,I('chr',7,'#c2c8cb')]],'height:28px'));

/* control surface plug-in */
const hex=(cx,cy)=>[cx-23,cy-21,46,42,T('MUTE',30,11,'#62646a'),'hex'];
const kn=(cx,cy,r,c,f,a)=>{const R=r+6,rad=a*Math.PI/180,s=Math.sin(rad),k=-Math.cos(rad),C=2*Math.PI*r;return [cx-R-4,cy-R-4,2*R+8,2*R+8,`<svg width="${2*R+8}" height="${2*R+8}" viewBox="${-R-4} ${-R-4} ${2*R+8} ${2*R+8}"><circle r="${r}" fill="none" stroke="#000" stroke-width="2.500"/><circle r="${r}" fill="none" stroke="${c}" stroke-width="${r>30?3:2}" stroke-dasharray="${C*(a<90?.43:.87)} ${C}" transform="rotate(115)"/><circle r="${r-3}" fill="${f}"/><path d="M${-r+3} 4L${r-4} -8A${r-3} ${r-3} 0 0 0 ${-r+3} 4" fill="#fff1"/><path d="M${s*r*.5} ${k*r*.5}L${s*r*.8} ${k*r*.8}" stroke="${c}" stroke-width="2"/><circle cx="${s*(r+5)}" cy="${k*(r+5)}" r="1.300" fill="${c}"/></svg>`]};
def('control-surface',`:host{width:293px;height:474px;background:rgba(66,74,80,.96);border:1px solid #2c3338;box-shadow:0 3px 10px #0007}.bd{width:279px;height:440px;margin-left:6px;border-radius:5px 5px 3px 3px;background:linear-gradient(#232323,#121212);border:1px solid #101010}.c{border-radius:50%;background:#263038;border:1.500px solid #0d1114;box-shadow:0 0 0 1px #303a40}.pan{width:259px;height:175px;margin-left:8px;border-radius:4px;background:linear-gradient(#252e2f,#182021)}.hex{background:#000;clip-path:polygon(27% 0,73% 0,80% 6%,100% 50%,80% 94%,73% 100%,27% 100%,20% 94%,0 50%,20% 6%)}.red{background:linear-gradient(#412f30,#2f2224);border-radius:4px;}`,()=>
 B(286,507,[ic(300,521,11,'tri','#9ba3a7',13),ic(319,521,14,'gear','#9ba3a7'),tx(334,520,126,13.500,'Control Surface (Master)','#959ea3',600),ic(526,520,8,'min','#b3babd'),ic(544.500,521,10,'max','#b3babd',10),ic(563,521,10,'x','#b3babd')],'height:26px')+
 `<div class="bd">${B(293,534,[[297,539,34,34,I('wrench',17,'#d5dde2'),'c'],[337,539,34,34,I('plus',9,'#d5dde2'),'c'],[417,539,36,54,'<svg width="36" height="54" viewBox="0 0 36 54"><path d="M1 16Q3 7 14 6q5-1 8 1 4-2 8 4 4 6 3 16-3-7-7-1-4-5-9-3l2-5q-5-5-9-2l1-4q-5-2-10 4z" fill="#d8dee2"/><path d="M27 0q-5 3-6 8M28 25q-3 20-13 27-4 2-8 0" fill="none" stroke="#8e979c" stroke-width="1.200"/></svg>'],[513,539,34,34,I('hand',17,'#d5dde2'),'c']],'height:66px')}
 ${B(293,600,[tx(397.500,610,69,17,'ELECTRO','#f4f4f4')],'height:18px')}${B(293,618,[tx(372,625.500,118,12,'ADVANCED TEMPLATE','#f4f4f4')],'height:52px')}
 <div class="pan">${B(301,670,[tx(322,697,54,16,'DRUMS','#ee7a30'),tx(409,697,45,16,'INSTR.','#46a155'),tx(488,697,51,16,'BACKG.','#eee05c')],'height:38px')}${B(301,708,[hex(349,729.500),hex(431,729.500),hex(514,729.500)],'height:52px')}
 ${B(301,760,[[313,760,120,71,`<div class="col">${B(313,760,[hex(343,785.500),hex(403,785.500)],'height:48px;width:120px')}${B(313,808,[tx(313.500,817,58,16,'VOCALS','#70d0cf'),tx(388,817,28,16,'SUB','#9c77c8')],'height:23px')}</div>`],[433,760,114,71,`<div class="col">${B(433,760,[hex(461,785.500),hex(519,785.500)],'height:48px;width:114px')}${B(433,808,[tx(448,817,29,16,'MID','#b5589a'),tx(503,817,32,16,'SIDE','#459b68')],'height:23px')}</div>`,'red']])}</div>
 ${B(293,845,[kn(348,901,23,'#5fe070','#265c2f',0),kn(430.500,900,33,'#f75757','#5a2224',155),kn(514,900,23,'#f58a52','#57332a',155)],'height:85px')}${B(293,930,[tx(324,938,48,15,'ST. SEP','#6cdc78'),tx(394,948,73,15,'POST VOL.','#ef5c5c'),tx(505,938,18,15,'SG','#ee8a54')])}</div>`);

/* web browser window */
def('skeleton-card',`:host{width:472px;flex:none}.p{height:266px;border-radius:14px;background:#ccc}.m{display:flex;margin-top:18px;gap:21px}.a{width:63px;height:63px;border-radius:50%;background:#e3e3e3;margin-top:3px}.l{height:35px;border-radius:3px;background:#e3e3e3;margin-bottom:17px;width:349px}.l+.l{width:233px}`,()=>`<div class="p"></div><div class="m"><div class="a"></div><div><div class="l"></div><div class="l"></div></div></div>`);
def('chrome-window',`:host{width:1084px;height:856px;background:#fff;border:1px solid #555;border-radius:9px 9px 5px 5px;overflow:hidden;box-shadow:0 6px 22px #0007}.s{background:linear-gradient(#2a2a2a,#191919 30%,#1c1c1c);height:45px;border-bottom:1px solid #555}.tb{background:linear-gradient(#2e2e2e,#0e0e0e);height:38px}.t1{border:1px solid #3a3a3a;border-bottom:0;border-radius:8px 8px 0 0;background:#1a1a1a}.t2{background:linear-gradient(#4c4c4c,#333);border-radius:8px 8px 0 0}.o{border-radius:14px;background:#333}.c{border-radius:50%;background:#e3e3e3}.pg{height:773px;overflow:hidden;background:#fff}.ct{background:#aaa;border-radius:7px}.stt{background:#1e1e1e;border-radius:0 4px 0 0}`,()=>{
 const w='#f2f2f2';return `<div class="s">${B(3310,165,[[3317,176,239,33,B(3318,177,[ic(3337,193,15,'git'),tx(3353,193,174,14,'james-salafatinos/object-detectio','#c4c4c4'),ic(3541,193,9,'x','#e8e8e8')],'width:237px;height:32px'),'t1'],[3557,176,238,33,B(3557,176,[ic(3576,193,16,'ytl'),tx(3592,193,46,14,'YouTube','#fafafa'),ic(3780,193,9,'x','#e8e8e8')],'width:238px;height:33px'),'t2'],[3805,180,26,26,I('plus2',13,'#ddd'),'','border-radius:50%;background:#2c2c2c'],ic(4232,178,10,'chd',w,7),[4273,177,10,1,'','','background:#fff'],[4319,172,10,11,'','','border:1.300px solid #fff;border-radius:2px'],ic(4370,178,12,'xs',w)])}</div>
 <div class="tb">${B(3310,210,[ic(3331,228,14,'back',w),ic(3363,228,14,'fwd','#777'),ic(3395,228,12,'xs',w),ic(3427,228,15,'home',w,16),[3449,214,740,28,B(3449,214,[ic(3466,227,11,'lock','#999ea3',13),tx(3483,227.500,81,15,'youtube.com','#fafafa'),ic(4075,228,16,'goog'),ic(4107,228,15,'zin','#9aa0a6'),ic(4139,228,15,'share','#b9bcc0'),ic(4171,228,15,'star','#1a73e8')],'width:740px;height:28px'),'o'],ic(4211,228,16,'gram'),[4232,219,22,23,`<div class="col" style="align-items:center"><div class="b" style="width:16px;height:10px;background:#5fb330;border-radius:2px"><svg width="12" height="8" viewBox="0 0 12 8"><path d="M1 7Q1 2 5 1M4 7q0-3 3-5M7 7q3-1 3-5" stroke="#fff" fill="none"/></svg></div><div class="b" style="width:22px;height:12px;background:#5aa55a;border-radius:2px;margin-top:1px">${T('3.4k',18,11,'#10240f')}</div></div>`],ic(4275,228,16,'puz',w),ic(4306,228,15,'side',w),ic(4339,228,22,'ava'),ic(4371,228,14,'vdots',w)])}</div>
 <div class="pg">${B(3310,248,[[3356,283,32,24,'','','border:solid #5d5d5d;border-width:2px 0;background:linear-gradient(#5d5d5d,#5d5d5d) 0 50%/100% 2px no-repeat'],...[4057,4141,4225,4309].map(x=>[x-28,268,56,56,'','c']),[4372,254,14,90,'','ct']],'height:226px')}
 <div class="row" style="gap:28px;padding-left:41px;height:459px"><skeleton-card></skeleton-card><skeleton-card></skeleton-card></div><div class="row" style="gap:28px;padding-left:41px"><skeleton-card></skeleton-card><skeleton-card></skeleton-card></div></div>
 <div class="b stt" style="position:absolute;left:0;bottom:0;width:359px;height:22px;justify-content:flex-start;padding-left:5px">${T('Waiting for epsilon.6sense.com...',173,14,'#e4e4e4')}</div>`});

/* taskbar */
def('task-bar',`:host{height:49px;background:linear-gradient(90deg,#232526,#1f2425 30%,#222425 60%,#1e2425)}.p{border-radius:16px;background:#2d3131;border-top:1px solid #3c4040}.ch{background:#2f3232;border:1px solid #3b3e3e;border-radius:4px;flex-direction:column;justify-content:flex-end}.ch ui-icon{margin-bottom:4px}.ch i{width:15px;height:3px;border-radius:2px;background:#4cc2ff}.a{flex-direction:column;justify-content:flex-end}.a ui-icon{margin-bottom:5px}.a i{width:6px;height:3px;border-radius:2px;background:#9a9c9d}`,()=>{
 const ap=(x,n,d=1)=>[x-12,1391,24,44,I(n,24)+`<i style="${d?'':'visibility:hidden'}"></i>`,'a'];
 const F='Noto Sans';
 return B(0,1391,[ic(32,1416,20,'sun'),[51,1400,36,34,`<div class="col" style="gap:1px">${T('51°F',22,11.500,'#fff',400,F)}${T('Sunny',34,11.500,'#d0d3d4',400,F)}</div>`],[2320,1405,23,23,I('win',23)],[2357,1400,100,32,B(2357,1400,[ic(2387,1416,15,'find','#fff'),tx(2399,1416,36,12.500,'Search','#f0f2f2',400,F)],'width:100px;height:32px'),'p'],ap(2482,'tview',0),ap(2525,'chat',0),[2551,1396,38,39,I('chrome',24)+'<i></i>','ch'],ap(2614,'expl'),ap(2658,'code'),ap(2702,'rdp',0),ap(2746,'cur'),ap(2790,'fruit'),
 ic(4868,1416,12,'chu','#fff',8),ic(4892,1417,17,'cloud'),ic(4916,1416,16,'upd','#fff'),ic(4944,1416,15,'mic','#7cc7d9',17),ic(4976,1416,17,'wifi','#fff',15),ic(5000,1416,17,'vol','#fff',15),[5022,1400,54,34,`<div class="col" style="align-items:flex-end">${T('1:15 PM',39,12,'#fff',400,F)}${T('2/19/2023',53,12,'#fff',400,F)}</div>`],[5084,1408,16,16,T('5',7,11,'#0b1a22'),'','border-radius:50%;background:#4cc2ff']])});

def('desk-top',`:host{width:5120px;height:1440px;zoom:.8;position:relative;overflow:hidden;background:#434a50}.mid{display:flex;height:1185px}.sp{width:8px;background:#4a5157;border-left:1px solid #30373c;flex:none;overflow:hidden}channel-rack,control-surface,chrome-window{position:absolute}channel-rack{left:449px;top:368px}control-surface{left:285px;top:506px}chrome-window{left:3309px;top:164px}`,()=>
 `<main-toolbar></main-toolbar><div class="mid"><browser-panel></browser-panel><div class="sp"></div><playlist-panel></playlist-panel></div><task-bar></task-bar><channel-rack></channel-rack><control-surface></control-surface><chrome-window></chrome-window>`);
</script></body></html>
